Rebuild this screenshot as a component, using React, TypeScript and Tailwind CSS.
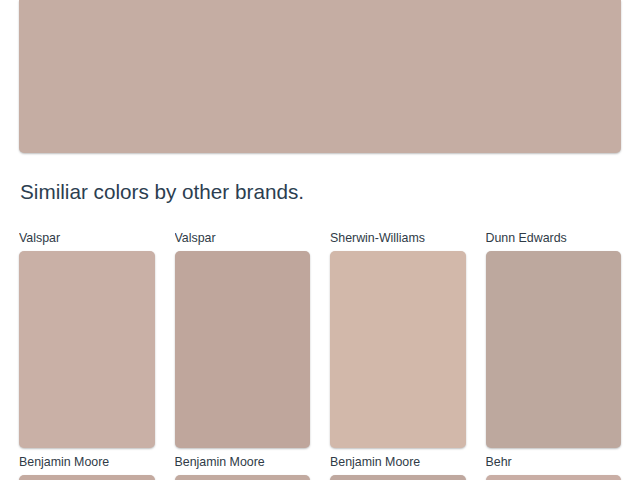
const similar = [
  { brand: "Valspar", color: "#c9b0a6" },
  { brand: "Valspar", color: "#bfa69c" },
  { brand: "Sherwin-Williams", color: "#d2b8aa" },
  { brand: "Dunn Edwards", color: "#bda89e" },
  { brand: "Benjamin Moore", color: "#c4aaa0" },
  { brand: "Benjamin Moore", color: "#c2aaa0" },
  { brand: "Benjamin Moore", color: "#bfa89f" },
  { brand: "Behr", color: "#c9aea5" },
];

function Swatch({ brand, color }: { brand: string; color: string }) {
  return (
    <div>
      <div className="h-4 mb-[6px] pt-px text-[12.4px] leading-4 text-[#2f3b47] truncate">
        {brand}
      </div>
      <div
        className="h-[197px] rounded-[5px] shadow-[0_1px_2px_rgba(0,0,0,0.25)]"
        style={{ backgroundColor: color }}
      />
    </div>
  );
}

export default function App() {
  return (
    <div className="h-[480px] overflow-hidden bg-white px-[19px] font-['Liberation_Sans',Arial,sans-serif]">
      <div className="h-[153px] rounded-b-[5px] bg-[#c5ada3] shadow-[0_1px_2px_rgba(0,0,0,0.25)]" />
      <h2 className="mt-[24px] pl-px pt-px text-[20.7px] leading-7 text-[#2c3e50]">
        Similiar colors by other brands.
      </h2>
      <div className="mt-[23px] grid grid-cols-4 gap-x-[20px] gap-y-[5px]">
        {similar.map((s, i) => (
          <Swatch key={i} brand={s.brand} color={s.color} />
        ))}
      </div>
    </div>
  );
}
